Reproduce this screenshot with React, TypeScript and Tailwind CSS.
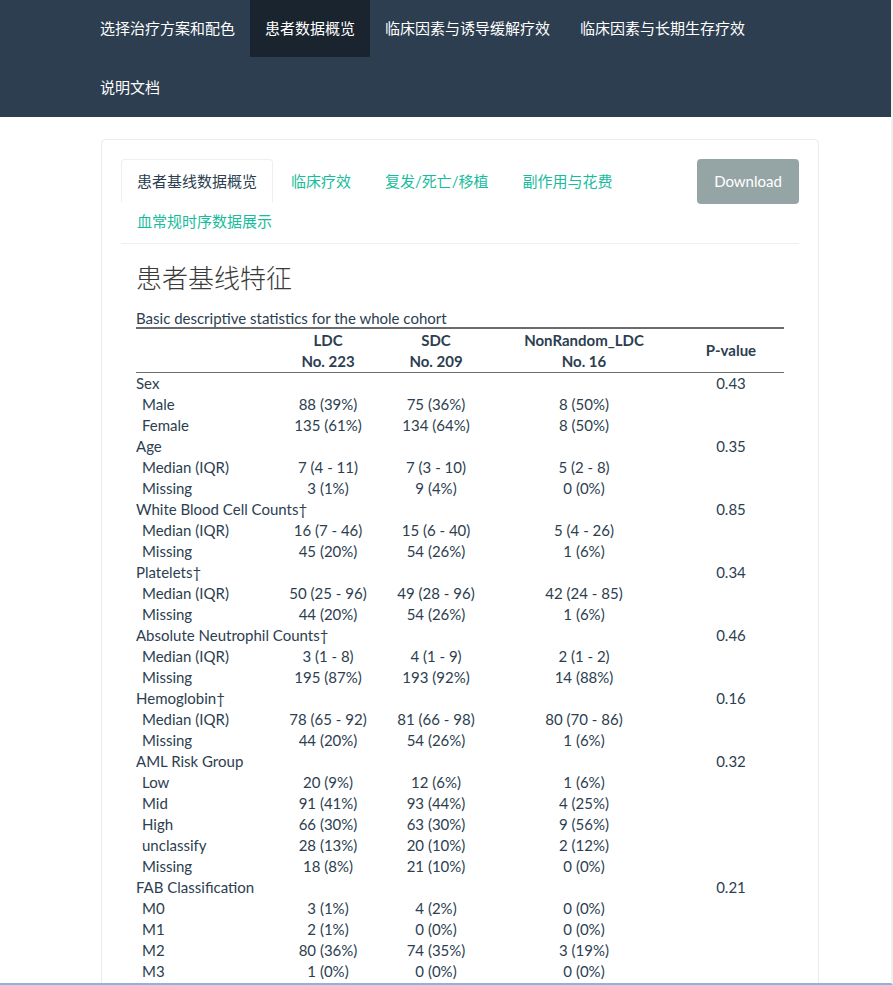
import React from "react";

type Row = {
  label: string;
  sub?: boolean;
  ldc?: string;
  sdc?: string;
  nr?: string;
  p?: string;
};

const rows: Row[] = [
  { label: "Sex", p: "0.43" },
  { label: "Male", sub: true, ldc: "88 (39%)", sdc: "75 (36%)", nr: "8 (50%)" },
  { label: "Female", sub: true, ldc: "135 (61%)", sdc: "134 (64%)", nr: "8 (50%)" },
  { label: "Age", p: "0.35" },
  { label: "Median (IQR)", sub: true, ldc: "7 (4 - 11)", sdc: "7 (3 - 10)", nr: "5 (2 - 8)" },
  { label: "Missing", sub: true, ldc: "3 (1%)", sdc: "9 (4%)", nr: "0 (0%)" },
  { label: "White Blood Cell Counts†", p: "0.85" },
  { label: "Median (IQR)", sub: true, ldc: "16 (7 - 46)", sdc: "15 (6 - 40)", nr: "5 (4 - 26)" },
  { label: "Missing", sub: true, ldc: "45 (20%)", sdc: "54 (26%)", nr: "1 (6%)" },
  { label: "Platelets†", p: "0.34" },
  { label: "Median (IQR)", sub: true, ldc: "50 (25 - 96)", sdc: "49 (28 - 96)", nr: "42 (24 - 85)" },
  { label: "Missing", sub: true, ldc: "44 (20%)", sdc: "54 (26%)", nr: "1 (6%)" },
  { label: "Absolute Neutrophil Counts†", p: "0.46" },
  { label: "Median (IQR)", sub: true, ldc: "3 (1 - 8)", sdc: "4 (1 - 9)", nr: "2 (1 - 2)" },
  { label: "Missing", sub: true, ldc: "195 (87%)", sdc: "193 (92%)", nr: "14 (88%)" },
  { label: "Hemoglobin†", p: "0.16" },
  { label: "Median (IQR)", sub: true, ldc: "78 (65 - 92)", sdc: "81 (66 - 98)", nr: "80 (70 - 86)" },
  { label: "Missing", sub: true, ldc: "44 (20%)", sdc: "54 (26%)", nr: "1 (6%)" },
  { label: "AML Risk Group", p: "0.32" },
  { label: "Low", sub: true, ldc: "20 (9%)", sdc: "12 (6%)", nr: "1 (6%)" },
  { label: "Mid", sub: true, ldc: "91 (41%)", sdc: "93 (44%)", nr: "4 (25%)" },
  { label: "High", sub: true, ldc: "66 (30%)", sdc: "63 (30%)", nr: "9 (56%)" },
  { label: "unclassify", sub: true, ldc: "28 (13%)", sdc: "20 (10%)", nr: "2 (12%)" },
  { label: "Missing", sub: true, ldc: "18 (8%)", sdc: "21 (10%)", nr: "0 (0%)" },
  { label: "FAB Classification", p: "0.21" },
  { label: "M0", sub: true, ldc: "3 (1%)", sdc: "4 (2%)", nr: "0 (0%)" },
  { label: "M1", sub: true, ldc: "2 (1%)", sdc: "0 (0%)", nr: "0 (0%)" },
  { label: "M2", sub: true, ldc: "80 (36%)", sdc: "74 (35%)", nr: "3 (19%)" },
  { label: "M3", sub: true, ldc: "1 (0%)", sdc: "0 (0%)", nr: "0 (0%)" },
];

const navItems = ["选择治疗方案和配色", "患者数据概览", "临床因素与诱导缓解疗效", "临床因素与长期生存疗效", "说明文档"];
const tabs = ["患者基线数据概览", "临床疗效", "复发/死亡/移植", "副作用与花费", "血常规时序数据展示"];

const font = { fontFamily: "Lato, 'Noto Sans CJK SC', sans-serif" };

export default function App() {
  return (
    <div
      className="h-[985px] overflow-hidden bg-white text-[#2c3e50] border-b-2 border-b-[#8eb2e2] border-r-2 border-r-[#f0f0f0]"
      style={font}
    >
      <nav className="bg-[#2c3e50] h-[117px]">
        <ul className="flex flex-wrap pl-[85px] pr-[100px]">
          {navItems.map((item, i) => (
            <li
              key={item}
              className={`h-[57px] px-[15px] flex items-center text-[15px] text-white ${
                i === 1 ? "bg-[#1a242f]" : ""
              } ${i === 4 ? "mt-[2px]" : ""}`}
            >
              {item}
            </li>
          ))}
        </ul>
      </nav>

      <div className="mx-[101px] mt-[22px] border border-[#ebebeb] rounded-[4px] px-[19px] pt-[19px] w-[718px] min-h-[900px]">
        <div className="flex border-b border-[#ecf0f1]">
          <ul className="flex flex-wrap flex-1">
            {tabs.map((t, i) => (
              <li
                key={t}
                className={`mr-[2px] -mb-px px-[15px] flex items-center text-[15px] border rounded-t-[4px] ${
                  i === 0
                    ? "border-[#ecf0f1] border-b-white bg-white text-[#2c3e50]"
                    : "border-transparent text-[#18bc9c]"
                } ${i === 4 ? "h-[42px] pb-[3px]" : "h-[44px]"}`}
              >
                {t}
              </li>
            ))}
          </ul>
          <div className="h-[45px] w-[102px] bg-[#95a5a6] rounded-[4px] text-white text-[15px] flex items-center justify-center self-start">
            Download
          </div>
        </div>

        <h3 className="mt-[17px] ml-[15px] text-[26px] leading-[34px] text-[#3a3a3a] font-light">患者基线特征</h3>

        <div className="ml-[15px] w-[648px] mt-[14px] text-[15px]">
          <div className="leading-[18px] text-[#2c3e50]">Basic descriptive statistics for the whole cohort</div>
          <table className="w-full border-collapse table-fixed">
            <colgroup>
              <col className="w-[138px]" />
              <col className="w-[108px]" />
              <col className="w-[108px]" />
              <col className="w-[188px]" />
              <col className="w-[106px]" />
            </colgroup>
            <thead>
              <tr className="border-t-2 border-b border-t-[#6b6b6b] border-b-[#6b6b6b] font-bold">
                <th></th>
                <th className="text-center font-bold leading-[21px] pt-px">
                  LDC
                  <br />
                  No. 223
                </th>
                <th className="text-center font-bold leading-[21px]">
                  SDC
                  <br />
                  No. 209
                </th>
                <th className="text-center font-bold leading-[21px]">
                  NonRandom_LDC
                  <br />
                  No. 16
                </th>
                <th className="text-center font-bold leading-[21px]">P-value</th>
              </tr>
            </thead>
            <tbody>
              {rows.map((r, i) => (
                <tr key={i} className="h-[21px] leading-[21px]">
                  <td className={r.sub ? "pl-[6px] whitespace-nowrap" : "whitespace-nowrap"}>{r.label}</td>
                  <td className="text-center">{r.ldc ?? ""}</td>
                  <td className="text-center">{r.sdc ?? ""}</td>
                  <td className="text-center">{r.nr ?? ""}</td>
                  <td className="text-center">{r.p ?? ""}</td>
                </tr>
              ))}
            </tbody>
          </table>
        </div>
      </div>
    </div>
  );
}
